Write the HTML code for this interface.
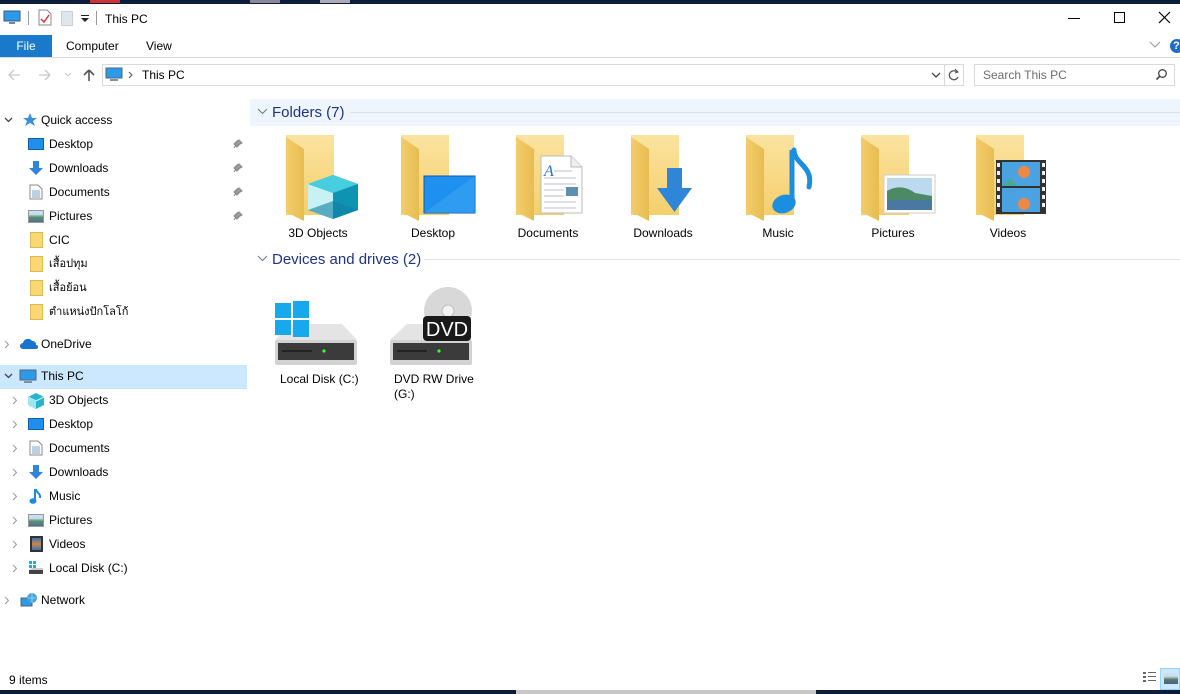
<!DOCTYPE html>
<html><head><meta charset="utf-8"><style>
*{margin:0;padding:0;box-sizing:border-box}
body{width:1180px;height:694px;position:relative;overflow:hidden;background:#fff;font-family:"Liberation Sans","Noto Sans CJK SC",sans-serif;font-size:12px;color:#000}
.a{position:absolute}
.t{position:absolute;white-space:nowrap;font-size:12px;line-height:14px}
.lab{position:absolute;width:110px;text-align:center;font-size:12px;top:226px}
</style></head><body>
<div class="a" style="left:0;top:0;width:1180px;height:4px;background:#0d1c38"></div>
<div class="a" style="left:90px;top:0;width:30px;height:3px;background:#c33"></div>
<div class="a" style="left:250px;top:0;width:30px;height:3px;background:#889"></div>
<div class="a" style="left:320px;top:0;width:30px;height:3px;background:#aab"></div>
<svg class="a" style="left:3px;top:10px" width="18" height="16"><rect x="1" y="1" width="16" height="10" fill="#2b9ae8" stroke="#457" stroke-width="1"/><rect x="6" y="12" width="6" height="2" fill="#6a8aa8"/></svg>
<div class="a" style="left:28px;top:11px;width:1px;height:14px;background:#999"></div>
<svg class="a" style="left:38px;top:9px" width="14" height="17"><path d="M1 1h8l4 4v11H1z" fill="#fff" stroke="#888"/><path d="M3 10l3 3 5-7" stroke="#d33" fill="none" stroke-width="1.5"/></svg>
<div class="a" style="left:61px;top:11px;width:12px;height:15px;background:#dfe6f0;border:1px solid #c8d0dc"></div>
<svg class="a" style="left:81px;top:15px" width="9" height="8"><rect x="0" y="0" width="8" height="1" fill="#222"/><path d="M0 3h8l-4 4z" fill="#222"/></svg>
<div class="a" style="left:96px;top:11px;width:1px;height:14px;background:#999"></div>
<div class="t" style="left:105px;top:12px">This PC</div>
<div class="a" style="left:1068px;top:18px;width:12px;height:1px;background:#000"></div>
<div class="a" style="left:1114px;top:12px;width:11px;height:11px;border:1px solid #000"></div>
<svg class="a" style="left:1158px;top:11px" width="13" height="13"><path d="M1 1l11 11M12 1L1 12" stroke="#000" stroke-width="1.2"/></svg>
<div class="a" style="left:0;top:35px;width:52px;height:22px;background:#1979ca;color:#fff;font-size:12px;line-height:22px;text-align:center">File</div>
<div class="t" style="left:66px;top:39px">Computer</div>
<div class="t" style="left:146px;top:39px">View</div>
<svg class="a" style="left:1149px;top:41px" width="12" height="8"><path d="M1 1l5 5 5-5" stroke="#999" fill="none"/></svg>
<div class="a" style="left:1170px;top:39px;width:14px;height:14px;border-radius:50%;background:#1f6fc5;color:#fff;font-size:11px;font-weight:bold;line-height:14px;text-indent:3px">?</div>
<div class="a" style="left:0;top:57px;width:1180px;height:1px;background:#dadbdc"></div>
<svg class="a" style="left:7px;top:68px" width="80" height="14"><path d="M2 7h11M2 7l5-5M2 7l5 5" stroke="#c8c8c8" fill="none" stroke-width="1.3"/><path d="M32 7h11M43 7l-5-5M43 7l-5 5" stroke="#c8c8c8" fill="none" stroke-width="1.3"/><path d="M58 5l3 3 3-3" stroke="#c8c8c8" fill="none"/></svg>
<svg class="a" style="left:82px;top:68px" width="14" height="14"><path d="M7 13V2M7 2L2 7M7 2l5 5" stroke="#555" fill="none" stroke-width="1.6"/></svg>
<div class="a" style="left:102px;top:64px;width:843px;height:22px;border:1px solid #d9d9d9"></div>
<div class="a" style="left:944px;top:64px;width:20px;height:22px;border:1px solid #d9d9d9;border-left:none"></div>
<svg class="a" style="left:105px;top:67px" width="18" height="16"><rect x="1" y="1" width="16" height="10" fill="#2b9ae8" stroke="#567"/><rect x="5" y="12" width="8" height="2" fill="#7a94ad"/></svg>
<svg class="a" style="left:128px;top:71px" width="6" height="8"><path d="M1 1l3 3-3 3" stroke="#555" fill="none"/></svg>
<div class="t" style="left:142px;top:68px">This PC</div>
<svg class="a" style="left:931px;top:71px" width="10" height="8"><path d="M1 2l4 4 4-4" stroke="#444" fill="none" stroke-width="1.3"/></svg>
<svg class="a" style="left:948px;top:68px" width="12" height="14"><path d="M9 4A4.5 4.5 0 1 0 10 9" stroke="#555" fill="none" stroke-width="1.3"/><path d="M7 1l3 3-3 1" stroke="#555" fill="none"/></svg>
<div class="a" style="left:974px;top:64px;width:201px;height:22px;border:1px solid #d9d9d9"></div>
<div class="t" style="left:983px;top:68px;color:#6d6d6d">Search This PC</div>
<svg class="a" style="left:1155px;top:68px" width="13" height="13"><circle cx="7.5" cy="5.5" r="3.8" stroke="#444" fill="none" stroke-width="1.3"/><path d="M5 8l-3.5 3.5" stroke="#444" stroke-width="1.6"/></svg>
<svg class="a" style="left:4px;top:117px" width="9" height="7"><path d="M1 1l3.5 3.5L8 1" stroke="#444" fill="none" stroke-width="1.3"/></svg>
<svg class="a" style="left:21px;top:112px" width="16" height="16"><path d="M9 1l2 5h5l-4 3 2 5-5-3-5 3 2-5-4-3h5z" fill="#3b8fe0"/></svg>
<div class="t" style="left:41px;top:113px">Quick access</div>
<div class="a" style="left:28px;top:138px;width:16px;height:12px;background:#1e8fef;border:1px solid #0f5fa8"></div>
<div class="t" style="left:49px;top:137px">Desktop</div>
<svg class="a" style="left:28px;top:160px" width="16" height="16"><path d="M5 1h6v7h4l-7 7-7-7h4z" fill="#2f86d8"/></svg>
<div class="t" style="left:49px;top:161px">Downloads</div>
<svg class="a" style="left:29px;top:184px" width="14" height="16"><path d="M1 1h8l4 4v10H1z" fill="#fff" stroke="#888"/><path d="M3 7h8M3 9h8M3 11h8M3 13h8" stroke="#7aa0c8"/></svg>
<div class="t" style="left:49px;top:185px">Documents</div>
<div class="a" style="left:28px;top:210px;width:16px;height:13px;border:1px solid #999;background:linear-gradient(#c7dfef 30%,#5f8f6f 55%,#4a7090)"></div>
<div class="t" style="left:49px;top:209px">Pictures</div>
<div class="a" style="left:30px;top:232px;width:13px;height:16px;background:#f8d775;border:1px solid #e0b850"></div>
<div class="t" style="left:49px;top:233px">CIC</div>
<div class="a" style="left:30px;top:256px;width:13px;height:16px;background:#f8d775;border:1px solid #e0b850"></div>
<div class="t" style="left:49px;top:257px;font-size:11px">เสื้อปทุม</div>
<div class="a" style="left:30px;top:280px;width:13px;height:16px;background:#f8d775;border:1px solid #e0b850"></div>
<div class="t" style="left:49px;top:281px;font-size:11px">เสื้อย้อน</div>
<div class="a" style="left:30px;top:304px;width:13px;height:16px;background:#f8d775;border:1px solid #e0b850"></div>
<div class="t" style="left:49px;top:305px;font-size:11px">ตำแหน่งปักโลโก้</div>
<svg class="a" style="left:233px;top:139px" width="10" height="10"><path d="M6 1l3 3-2 1-2 2-1 1-3-3 1-1 2-2zM3 6L1 9" stroke="#888" fill="#999"/></svg>
<svg class="a" style="left:233px;top:163px" width="10" height="10"><path d="M6 1l3 3-2 1-2 2-1 1-3-3 1-1 2-2zM3 6L1 9" stroke="#888" fill="#999"/></svg>
<svg class="a" style="left:233px;top:187px" width="10" height="10"><path d="M6 1l3 3-2 1-2 2-1 1-3-3 1-1 2-2zM3 6L1 9" stroke="#888" fill="#999"/></svg>
<svg class="a" style="left:233px;top:211px" width="10" height="10"><path d="M6 1l3 3-2 1-2 2-1 1-3-3 1-1 2-2zM3 6L1 9" stroke="#888" fill="#999"/></svg>
<svg class="a" style="left:4px;top:340px" width="6" height="9"><path d="M1 1l3.5 3.5L1 8" stroke="#999" fill="none"/></svg>
<svg class="a" style="left:20px;top:338px" width="18" height="12"><path d="M3 11a3 3 0 0 1 0-6 5 5 0 0 1 9-2 3.5 3.5 0 0 1 4 4 2 2 0 0 1 0 4z" fill="#1a73d1"/></svg>
<div class="t" style="left:41px;top:337px">OneDrive</div>
<div class="a" style="left:0;top:365px;width:247px;height:24px;background:#cce8ff"></div>
<svg class="a" style="left:4px;top:373px" width="9" height="7"><path d="M1 1l3.5 3.5L8 1" stroke="#444" fill="none" stroke-width="1.3"/></svg>
<svg class="a" style="left:19px;top:369px" width="18" height="16"><rect x="1" y="1" width="16" height="10" fill="#2b9ae8" stroke="#567"/><rect x="5" y="12" width="8" height="2" fill="#7a94ad"/></svg>
<div class="t" style="left:41px;top:369px">This PC</div>
<svg class="a" style="left:12px;top:396px" width="6" height="9"><path d="M1 1l3.5 3.5L1 8" stroke="#999" fill="none"/></svg>
<svg class="a" style="left:27px;top:392px" width="18" height="17"><path d="M9 1l8 4v8l-8 4-8-4V5z" fill="#28b4c8"/><path d="M1 5l8 4 8-4" stroke="#bff" fill="none"/><path d="M1 5l8 4v8l-8-4z" fill="#9ee6ee"/></svg>
<div class="t" style="left:49px;top:393px">3D Objects</div>
<svg class="a" style="left:12px;top:420px" width="6" height="9"><path d="M1 1l3.5 3.5L1 8" stroke="#999" fill="none"/></svg>
<div class="a" style="left:28px;top:418px;width:16px;height:12px;background:#1e8fef;border:1px solid #0f5fa8"></div>
<div class="t" style="left:49px;top:417px">Desktop</div>
<svg class="a" style="left:12px;top:444px" width="6" height="9"><path d="M1 1l3.5 3.5L1 8" stroke="#999" fill="none"/></svg>
<svg class="a" style="left:29px;top:440px" width="14" height="16"><path d="M1 1h8l4 4v10H1z" fill="#fff" stroke="#888"/><path d="M3 7h8M3 9h8M3 11h8M3 13h8" stroke="#7aa0c8"/></svg>
<div class="t" style="left:49px;top:441px">Documents</div>
<svg class="a" style="left:12px;top:468px" width="6" height="9"><path d="M1 1l3.5 3.5L1 8" stroke="#999" fill="none"/></svg>
<svg class="a" style="left:28px;top:464px" width="16" height="16"><path d="M5 1h6v7h4l-7 7-7-7h4z" fill="#2f86d8"/></svg>
<div class="t" style="left:49px;top:465px">Downloads</div>
<svg class="a" style="left:12px;top:492px" width="6" height="9"><path d="M1 1l3.5 3.5L1 8" stroke="#999" fill="none"/></svg>
<svg class="a" style="left:29px;top:488px" width="14" height="17"><path d="M6 1v11" stroke="#1e88e5" stroke-width="2"/><ellipse cx="4" cy="13" rx="3.5" ry="2.8" fill="#1e88e5"/><path d="M7 1c0 4 5 4 4 9" stroke="#1e88e5" fill="none" stroke-width="2"/></svg>
<div class="t" style="left:49px;top:489px">Music</div>
<svg class="a" style="left:12px;top:516px" width="6" height="9"><path d="M1 1l3.5 3.5L1 8" stroke="#999" fill="none"/></svg>
<div class="a" style="left:28px;top:514px;width:16px;height:13px;border:1px solid #999;background:linear-gradient(#c7dfef 30%,#5f8f6f 55%,#4a7090)"></div>
<div class="t" style="left:49px;top:513px">Pictures</div>
<svg class="a" style="left:12px;top:540px" width="6" height="9"><path d="M1 1l3.5 3.5L1 8" stroke="#999" fill="none"/></svg>
<div class="a" style="left:30px;top:536px;width:13px;height:16px;background:linear-gradient(#3a6fb8,#c84 50%,#3a6fb8);border:2px solid #333"></div>
<div class="t" style="left:49px;top:537px">Videos</div>
<svg class="a" style="left:12px;top:564px" width="6" height="9"><path d="M1 1l3.5 3.5L1 8" stroke="#999" fill="none"/></svg>
<svg class="a" style="left:27px;top:560px" width="18" height="16"><rect x="2" y="1" width="3" height="3" fill="#19a8e8"/><rect x="6" y="1" width="3" height="3" fill="#19a8e8"/><rect x="2" y="5" width="3" height="3" fill="#19a8e8"/><rect x="6" y="5" width="3" height="3" fill="#19a8e8"/><path d="M2 10l3-2h11v2z" fill="#ccc"/><rect x="2" y="10" width="14" height="4" fill="#444"/></svg>
<div class="t" style="left:49px;top:561px">Local Disk (C:)</div>
<svg class="a" style="left:4px;top:596px" width="6" height="9"><path d="M1 1l3.5 3.5L1 8" stroke="#999" fill="none"/></svg>
<svg class="a" style="left:20px;top:592px" width="18" height="17"><rect x="1" y="6" width="11" height="8" fill="#2b9ae8" stroke="#567"/><circle cx="12" cy="6" r="5" fill="#4aa3df"/><path d="M8 6h8M12 1v10" stroke="#9dd" stroke-width=".8"/></svg>
<div class="t" style="left:41px;top:593px">Network</div>
<div class="a" style="left:250px;top:99px;width:930px;height:27px;background:#eef5fc"></div>
<svg class="a" style="left:257px;top:108px" width="11" height="8"><path d="M1 1l4.5 4.5L10 1" stroke="#6a7a9a" fill="none"/></svg>
<div class="t" style="left:272px;top:104px;font-size:15px;line-height:17px;color:#1e3287">Folders (7)</div>
<div class="a" style="left:350px;top:112px;width:830px;height:1px;background:#d6e2ef"></div>
<svg class="a" style="left:257px;top:255px" width="11" height="8"><path d="M1 1l4.5 4.5L10 1" stroke="#6a7a9a" fill="none"/></svg>
<div class="t" style="left:272px;top:251px;font-size:15px;line-height:17px;color:#1e3287">Devices and drives (2)</div>
<div class="a" style="left:424px;top:259px;width:756px;height:1px;background:#e2e2e2"></div>
<svg class="a" style="left:286px;top:134px" width="780" height="90" viewBox="0 0 780 90">
<defs>
<linearGradient id="fb" x1="0" y1="0" x2="0" y2="1"><stop offset="0" stop-color="#fbe3a0"/><stop offset="1" stop-color="#f4cf6c"/></linearGradient>
<linearGradient id="ff" x1="0" y1="0" x2="1" y2="0"><stop offset="0" stop-color="#f2cd6b"/><stop offset="1" stop-color="#e8bc52"/></linearGradient>
<g id="fold"><rect x="0" y="1" width="48" height="80" fill="url(#fb)"/><path d="M0 3l18 12v72L0 78z" fill="url(#ff)"/></g>
</defs>
<use href="#fold" x="0"/><use href="#fold" x="115"/><use href="#fold" x="230"/><use href="#fold" x="345"/><use href="#fold" x="460"/><use href="#fold" x="575"/><use href="#fold" x="690"/>
<path d="M47 41l25 9v26l-25 9-25-9V50z" fill="#1ba8c4"/><path d="M22 50l25 9v26l-25-9z" fill="#c8f1f4"/><path d="M22 50l25-9 25 9-25 9z" fill="#46cde0"/><path d="M47 59l25-9v26l-25 9z" fill="#0f93b3"/><path d="M22 76l25-9 25 9-25 9z" fill="#0d7ea0" opacity=".6"/>
<rect x="138" y="42" width="51" height="37" fill="#1e90ef" stroke="#0a5ea8"/><path d="M138 79l51-37v37z" fill="#49aef5" opacity=".4"/>
<path d="M255 22h30l11 11v46h-41z" fill="#fff" stroke="#bbb"/><path d="M285 22v11h11" fill="#eee" stroke="#bbb"/><text x="258" y="42" font-family="Liberation Serif" font-style="italic" font-size="16" fill="#2a6fc0">A</text><path d="M268 37h18M258 44h32M258 50h32M258 56h20M258 62h20M258 68h32M258 74h32" stroke="#aac" stroke-width=".8"/><rect x="280" y="53" width="12" height="9" fill="#5f8faf"/>
<path d="M381 34h15v20h10l-17.5 24L371 54h10z" fill="#2f86d8"/>
<path d="M506 16v52" stroke="#1b8ee0" stroke-width="5"/><ellipse cx="498" cy="70" rx="12" ry="9" fill="#1b8ee0" transform="rotate(-20 498 70)"/><path d="M508 16c0 14 20 16 15 37" stroke="#1b8ee0" stroke-width="5" fill="none" stroke-linecap="round"/>
<rect x="598" y="41" width="51" height="38" fill="#fff" stroke="#ccc"/><rect x="601" y="44" width="45" height="32" fill="#bcd9ef"/><path d="M601 57c10-6 20-4 28 2l17 3v14h-45z" fill="#4c8a66"/><rect x="601" y="66" width="45" height="10" fill="#4978a0"/>
<rect x="710" y="26" width="50" height="54" fill="#333"/><rect x="716" y="28" width="38" height="24" fill="#4aa2e0"/><rect x="716" y="54" width="38" height="24" fill="#4aa2e0"/><circle cx="738" cy="38" r="6" fill="#e84"/><circle cx="738" cy="70" r="6" fill="#e84"/><path d="M716 52l8-8 8 8z" fill="#4a9"/><g fill="#eee"><rect x="711" y="29" width="3" height="4"/><rect x="711" y="37" width="3" height="4"/><rect x="711" y="45" width="3" height="4"/><rect x="711" y="53" width="3" height="4"/><rect x="711" y="61" width="3" height="4"/><rect x="711" y="69" width="3" height="4"/><rect x="756" y="29" width="3" height="4"/><rect x="756" y="37" width="3" height="4"/><rect x="756" y="45" width="3" height="4"/><rect x="756" y="53" width="3" height="4"/><rect x="756" y="61" width="3" height="4"/><rect x="756" y="69" width="3" height="4"/></g>
</svg>
<div class="lab" style="left:263px">3D Objects</div>
<div class="lab" style="left:378px">Desktop</div>
<div class="lab" style="left:493px">Documents</div>
<div class="lab" style="left:608px">Downloads</div>
<div class="lab" style="left:723px">Music</div>
<div class="lab" style="left:838px">Pictures</div>
<div class="lab" style="left:953px">Videos</div>
<svg class="a" style="left:270px;top:285px" width="210" height="85">
<path d="M5 55l17-16h50l15 16z" fill="#e4e4e4"/><rect x="5" y="55" width="82" height="25" rx="2" fill="#d2d2d2"/><rect x="8" y="58" width="76" height="17" fill="#3b3b3b"/><circle cx="54" cy="66" r="1.6" fill="#3f3"/><path d="M12 66h30" stroke="#222" stroke-width="2"/>
<g fill="#18a9ec"><rect x="5" y="18" width="16" height="15"/><rect x="23" y="16" width="16" height="17"/><rect x="5" y="35" width="16" height="15"/><rect x="23" y="35" width="16" height="17"/></g>
<circle cx="178" cy="26" r="24" fill="#d8d8d8"/><circle cx="178" cy="26" r="6" fill="#f2f2f2" stroke="#bbb"/>
<path d="M120 55l17-16h50l15 16z" fill="#e4e4e4"/><rect x="120" y="55" width="82" height="25" rx="2" fill="#d2d2d2"/><rect x="123" y="58" width="76" height="17" fill="#3b3b3b"/><circle cx="169" cy="66" r="1.6" fill="#3f3"/><path d="M127 66h30" stroke="#222" stroke-width="2"/>
<rect x="153" y="31" width="48" height="25" rx="4" fill="#1a1a1a"/><text x="177" y="51" text-anchor="middle" font-family="Liberation Sans" font-size="20" fill="#fff">DVD</text>
</svg>
<div class="t" style="left:280px;top:372px">Local Disk (C:)</div>
<div class="t" style="left:394px;top:372px">DVD RW Drive</div>
<div class="t" style="left:394px;top:387px">(G:)</div>
<div class="t" style="left:9px;top:673px">9 items</div>
<svg class="a" style="left:1142px;top:671px" width="16" height="14"><g fill="#666"><rect x="1" y="1" width="3" height="2"/><rect x="1" y="5" width="3" height="2"/><rect x="1" y="9" width="3" height="2"/><rect x="6" y="1" width="8" height="1"/><rect x="6" y="5" width="8" height="1"/><rect x="6" y="9" width="8" height="1"/></g></svg>
<div class="a" style="left:1160px;top:668px;width:20px;height:22px;background:#cce8ff;border:1px solid #99d1ff"></div>
<div class="a" style="left:1164px;top:673px;width:14px;height:11px;background:linear-gradient(#cde 30%,#576 60%,#468)"></div>
<div class="a" style="left:0;top:690px;width:1180px;height:4px;background:#0d1c38"></div>
<div class="a" style="left:516px;top:690px;width:300px;height:4px;background:#c8c8c8"></div>
</body></html>
